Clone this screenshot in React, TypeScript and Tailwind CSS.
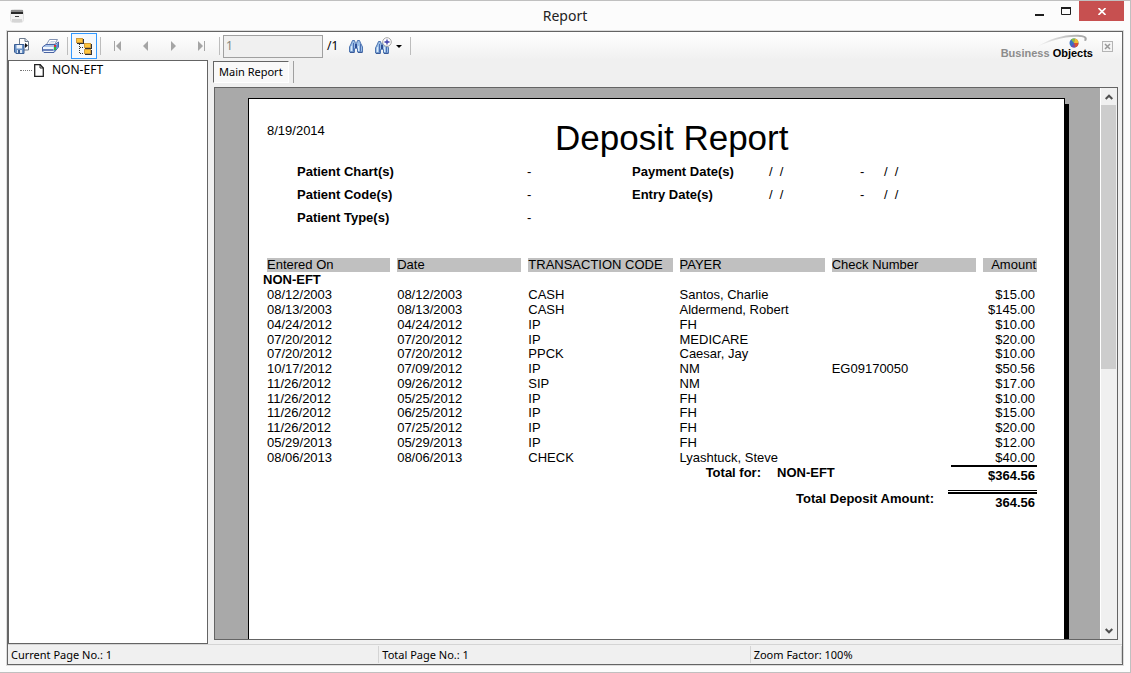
import type { ReactNode } from 'react';

const transactions = [
  { entered: '08/12/2003', date: '08/12/2003', code: 'CASH', payer: 'Santos, Charlie', check: '', amount: '$15.00' },
  { entered: '08/13/2003', date: '08/13/2003', code: 'CASH', payer: 'Aldermend, Robert', check: '', amount: '$145.00' },
  { entered: '04/24/2012', date: '04/24/2012', code: 'IP', payer: 'FH', check: '', amount: '$10.00' },
  { entered: '07/20/2012', date: '07/20/2012', code: 'IP', payer: 'MEDICARE', check: '', amount: '$20.00' },
  { entered: '07/20/2012', date: '07/20/2012', code: 'PPCK', payer: 'Caesar, Jay', check: '', amount: '$10.00' },
  { entered: '10/17/2012', date: '07/09/2012', code: 'IP', payer: 'NM', check: 'EG09170050', amount: '$50.56' },
  { entered: '11/26/2012', date: '09/26/2012', code: 'SIP', payer: 'NM', check: '', amount: '$17.00' },
  { entered: '11/26/2012', date: '05/25/2012', code: 'IP', payer: 'FH', check: '', amount: '$10.00' },
  { entered: '11/26/2012', date: '06/25/2012', code: 'IP', payer: 'FH', check: '', amount: '$15.00' },
  { entered: '11/26/2012', date: '07/25/2012', code: 'IP', payer: 'FH', check: '', amount: '$20.00' },
  { entered: '05/29/2013', date: '05/29/2013', code: 'IP', payer: 'FH', check: '', amount: '$12.00' },
  { entered: '08/06/2013', date: '08/06/2013', code: 'CHECK', payer: 'Lyashtuck, Steve', check: '', amount: '$40.00' },
];

const statusItems = ['Current Page No.: 1', 'Total Page No.: 1', 'Zoom Factor: 100%'];

function AppIcon() {
  return (
    <svg width="14" height="14" viewBox="0 0 14 14">
      <rect x="0.5" y="0.5" width="13" height="13" rx="3" fill="#f4f4f4" stroke="#e2e2e2" />
      <rect x="1" y="1" width="12" height="2" fill="#8a8a8a" />
      <rect x="1" y="3" width="12" height="2" fill="#2a2a2a" />
      <rect x="2" y="10" width="10" height="3" fill="#d6d6d6" />
      <rect x="5" y="7" width="4" height="1" fill="#444" />
    </svg>
  );
}

function ExportIcon() {
  return (
    <svg width="16" height="16" viewBox="0 0 16 16">
      <path d="M5.500.5h5.500l3.500 3v8.500h-9z" fill="#fff" stroke="#6c7a8c" />
      <path d="M11 .5v3h3.500" fill="#dbe6f4" stroke="#6c7a8c" />
      <path d="M11 5l3 2.500-3 2.500z" fill="#111" />
      <path d="M.5 6.500h9.500v9H2L.5 14z" fill="#6a93c8" stroke="#3c5f94" />
      <rect x="2.500" y="7" width="5.500" height="3.500" fill="#eef4fb" />
      <rect x="3" y="12" width="5" height="3" fill="#dfe8f3" />
      <rect x="4" y="12" width="2" height="3" fill="#3c5f94" />
    </svg>
  );
}

function PrintIcon() {
  return (
    <svg width="17" height="14" viewBox="0 0 17 14">
      <path d="M4.500 5.500L7.500.5h8l-3 5z" fill="#fff" stroke="#8494b4" />
      <path d="M8.500 2.500h5M7 4h5" stroke="#c3cfe2" />
      <path d="M.5 8L4 5.500h9l3.500-2.500v5L12 13.500H2L.5 12z" fill="#a9c4ea" stroke="#4a64a4" />
      <path d="M1 8h10.500v5H2L1 12z" fill="#f2f7fd" />
      <path d="M1 11h10.500" stroke="#3f5ca6" strokeWidth="1.500" />
      <path d="M12 8l4-3.500V8l-4 4.500z" fill="#5c8bd0" />
      <rect x="12" y="6" width="2" height="2" fill="#e03030" />
      <rect x="12" y="8" width="2" height="3" fill="#20c040" />
    </svg>
  );
}

function GroupTreeIcon() {
  return (
    <svg width="16" height="17" viewBox="0 0 16 17">
      <path d="M3.500 6v10M4 9.500h4M4 15.500h4" stroke="#333" strokeDasharray="1 1" />
      <rect x="1" y="1" width="7" height="5" fill="#333" />
      <rect x="9" y="6" width="7" height="5" fill="#333" />
      <rect x="9" y="12" width="7" height="5" fill="#333" />
      <rect x="0" y="0" width="7" height="5" fill="#d09a3c" />
      <rect x="8" y="5" width="7" height="5" fill="#d09a3c" />
      <rect x="8" y="11" width="7" height="5" fill="#d09a3c" />
      <rect x="1" y="1" width="5" height="3" fill="#ffc63c" />
      <rect x="9" y="6" width="5" height="3" fill="#ffc63c" />
      <rect x="9" y="12" width="5" height="3" fill="#ffc63c" />
    </svg>
  );
}

function BinocularShape() {
  return (
    <>
      <path d="M3.500 1.500h2l1 3v5h-1v3.500h-5V8l2-4z" fill="#9cbfe6" stroke="#4d74b0" />
      <path d="M8.500 1.500h2l1 2.500 2 4v5h-5V9.500h-1v-5z" fill="#9cbfe6" stroke="#4d74b0" />
      <path d="M2.500 7v5M9.500 7v5" stroke="#dcebf9" />
      <path d="M4.500 4v8.500M11.500 5v7.500" stroke="#4a6fb4" />
      <rect x="6" y="5" width="2" height="4" fill="#2f4f94" />
      <path d="M1 13.500h4.500M9 13.500h4.500" stroke="#3a5a98" />
    </>
  );
}

function FindIcon() {
  return (
    <svg width="14" height="15" viewBox="0 0 14 15">
      <BinocularShape />
    </svg>
  );
}

function ZoomIcon() {
  return (
    <svg width="17" height="18" viewBox="0 0 17 18">
      <g transform="translate(0 3)">
        <BinocularShape />
      </g>
      <circle cx="12" cy="5" r="4.300" fill="#fff" stroke="#a4a4a4" />
      <path d="M9.500 5h5M12 2.500v5" stroke="#3a3aa8" strokeWidth="1.300" />
    </svg>
  );
}

function NavIcon({ d, bar }: { d: string; bar?: number }) {
  return (
    <svg width="8" height="10" viewBox="0 0 8 10" fill="#a5a5a5">
      <path d={d} />
      {bar !== undefined && <rect x={bar} y="0" width="1" height="10" />}
    </svg>
  );
}

function BusinessObjectsLogo() {
  return (
    <div className="flex flex-col items-end">
      <svg width="56" height="14" viewBox="0 0 56 14" className="-mb-px">
        <defs>
          <linearGradient id="swoosh" x1="0" x2="1">
            <stop offset="0" stopColor="#f4f4f4" />
            <stop offset="1" stopColor="#a4a4a4" />
          </linearGradient>
        </defs>
        <path d="M0 13C12 5 28 0 43 1c6 .5 8 2.500 6 6l-2-.5c1.500-2.500 0-3.500-4-3.500C28 2 13 7 0 13z" fill="url(#swoosh)" />
        <circle cx="37" cy="9" r="4.500" fill="#3a6fc4" />
        <path d="M37 9l-3-3.400A4.500 4.500 0 0 1 38 4.600z" fill="#8bbf3f" />
        <path d="M37 9l1-4.400A4.500 4.500 0 0 1 41.500 9z" fill="#f0c030" />
        <path d="M37 9h4.500a4.500 4.500 0 0 1-3.500 4.400z" fill="#dc5030" />
        <path d="M37 9l1 4.400a4.500 4.500 0 0 1-3.500-.7z" fill="#7a4aa8" />
      </svg>
      <div className="font-['Liberation_Sans',sans-serif] text-[11px] leading-3 font-bold whitespace-nowrap text-[#8c8c8c]">
        Business <span className="text-black">Objects</span>
      </div>
    </div>
  );
}

function ToolButton({ label, children, disabled }: { label: string; children: ReactNode; disabled?: boolean }) {
  return (
    <button type="button" aria-label={label} disabled={disabled} className="flex h-6 w-7 items-center justify-center">
      {children}
    </button>
  );
}

function Separator() {
  return <div className="mx-[3px] h-[18px] w-px bg-[#bdbdbd]" />;
}

function TitleBar() {
  return (
    <header className="grid h-[29px] grid-cols-[1fr_auto_1fr] items-start">
      <div className="pt-2 pl-[10px]">
        <AppIcon />
      </div>
      <h1 className="pt-1 text-[14px] leading-[22px] text-[#222]">Report</h1>
      <div className="flex justify-end pr-[6px]">
        <button type="button" aria-label="Minimize" className="flex h-[22px] w-7 items-center justify-center">
          <svg width="9" height="8" viewBox="0 0 9 8"><path d="M0 7h9" stroke="#1e1e1e" strokeWidth="2" /></svg>
        </button>
        <button type="button" aria-label="Maximize" className="flex h-5 w-[26px] items-center justify-center">
          <svg width="10" height="8" viewBox="0 0 10 8"><path d="M.5 0v7.500h9V0" fill="none" stroke="#1e1e1e" /><path d="M0 1h10" stroke="#1e1e1e" strokeWidth="2" /></svg>
        </button>
        <button type="button" aria-label="Close" className="flex h-5 w-[45px] items-center justify-center bg-[#c75050]">
          <svg width="8" height="7" viewBox="0 0 8 7"><path d="M.5 0l7 7M7.500 0l-7 7" stroke="#fff" strokeWidth="1.600" /></svg>
        </button>
      </div>
    </header>
  );
}

function Toolbar() {
  return (
    <div className="flex h-7 items-center bg-linear-to-b from-white to-[#f0f0f0]">
      <ToolButton label="Export report"><ExportIcon /></ToolButton>
      <ToolButton label="Print report"><PrintIcon /></ToolButton>
      <Separator />
      <button type="button" aria-label="Toggle group tree" className="flex h-[26px] w-[26px] items-center justify-center border border-[#3399ff] bg-[#f6f9fc]">
        <GroupTreeIcon />
      </button>
      <Separator />
      <ToolButton label="First page" disabled><NavIcon d="M7 0v10L2 5z" bar={0} /></ToolButton>
      <ToolButton label="Previous page" disabled><NavIcon d="M6 0v10L1 5z" /></ToolButton>
      <ToolButton label="Next page" disabled><NavIcon d="M1 0v10l5-5z" /></ToolButton>
      <ToolButton label="Last page" disabled><NavIcon d="M0 0v10l5-5z" bar={6} /></ToolButton>
      <Separator />
      <input
        aria-label="Page number"
        defaultValue="1"
        disabled
        className="h-[23px] w-[100px] border border-[#a0a0a0] bg-[#f0f0f0] px-[2px] pb-[2px] text-[12px] text-[#85857a]"
      />
      <span className="w-[19px] pl-1 text-[12px] whitespace-nowrap">/1</span>
      <ToolButton label="Find text"><FindIcon /></ToolButton>
      <button type="button" aria-label="Zoom" className="flex h-6 items-center gap-1 pl-[5px]">
        <ZoomIcon />
        <svg width="6" height="3" viewBox="0 0 6 3"><path d="M0 0h6L3 3z" /></svg>
      </button>
      <div className="ml-2 h-[18px] w-px bg-[#bdbdbd]" />
      <div className="ml-auto flex items-center gap-[9px] pr-[9px]">
        <BusinessObjectsLogo />
        <button type="button" aria-label="Close view">
          <svg width="11" height="11" viewBox="0 0 11 11">
            <rect x="0.5" y="0.5" width="10" height="10" fill="#f4f4f4" stroke="#b4b4b4" />
            <path d="M3 3l5 5M8 3L3 8" stroke="#999" strokeWidth="1.500" />
          </svg>
        </button>
      </div>
    </div>
  );
}

function GroupTree() {
  return (
    <nav className="w-[200px] shrink-0 border border-[#646464] bg-white">
      <a href="#non-eft" className="flex h-[18px] items-center pl-[11px] text-[12px]">
        <span className="w-3 border-t border-dotted border-[#777]" />
        <svg width="10" height="13" viewBox="0 0 10 13" className="ml-[2px]">
          <path d="M.7.7h5.500L9.300 4v8.300H.7z" fill="#fff" stroke="#222" strokeWidth="1.300" />
          <path d="M6 .5V4h3.500" fill="none" stroke="#222" />
        </svg>
        <span className="ml-2">NON-EFT</span>
      </a>
    </nav>
  );
}

function Criteria() {
  return (
    <div className="mt-[2px] ml-[30px] grid grid-cols-[230px_105px_137px_91px_24px_1fr] leading-[23px] whitespace-pre">
      <b>Patient Chart(s)</b>
      <span>-</span>
      <b>Payment Date(s)</b>
      <span>/  /</span>
      <span>-</span>
      <span>/  /</span>
      <b>Patient Code(s)</b>
      <span>-</span>
      <b>Entry Date(s)</b>
      <span>/  /</span>
      <span>-</span>
      <span>/  /</span>
      <b>Patient Type(s)</b>
      <span className="col-span-4">-</span>
    </div>
  );
}

function TransactionTable() {
  return (
    <div className="mt-[29px] -ml-[7px] mr-5">
      <table className="h-[207px] w-full table-fixed border-separate border-spacing-x-[7px] border-spacing-y-0 leading-[14px] whitespace-nowrap">
        <colgroup>
          <col className="w-[123px]" />
          <col className="w-[124px]" />
          <col className="w-[144px]" />
          <col className="w-[145px]" />
          <col className="w-[144px]" />
          <col className="w-[54px]" />
        </colgroup>
        <thead>
          <tr className="h-[14px] text-left">
            <th className="bg-[#c0c0c0] p-0 font-normal">Entered On</th>
            <th className="bg-[#c0c0c0] p-0 font-normal">Date</th>
            <th className="bg-[#c0c0c0] p-0 font-normal">TRANSACTION CODE</th>
            <th className="bg-[#c0c0c0] p-0 font-normal">PAYER</th>
            <th className="bg-[#c0c0c0] p-0 font-normal">Check Number</th>
            <th className="bg-[#c0c0c0] p-0 pr-px text-right font-normal">Amount</th>
          </tr>
        </thead>
        <tbody>
          <tr id="non-eft" className="h-4">
            <th colSpan={6} className="p-0 text-left font-bold">
              <span className="-ml-1">NON-EFT</span>
            </th>
          </tr>
          {transactions.map((row, i) => (
            <tr key={i}>
              <td className="p-0">{row.entered}</td>
              <td className="p-0">{row.date}</td>
              <td className="p-0">{row.code}</td>
              <td className="p-0">{row.payer}</td>
              <td className="p-0">{row.check}</td>
              <td className="p-0 pr-[2px] text-right">{row.amount}</td>
            </tr>
          ))}
        </tbody>
      </table>
    </div>
  );
}

function Totals() {
  return (
    <div className="mr-[27px] font-bold">
      <div className="flex h-[25px] justify-end leading-4">
        <span className="mr-4">Total for:</span>
        <span className="w-[174px]">NON-EFT</span>
        <span className="w-[86px] border-t-2 border-black pr-[2px] text-right leading-[18px]">$364.56</span>
      </div>
      <div className="flex justify-end leading-[18px]">
        <span className="mr-[14px]">Total Deposit Amount:</span>
        <div className="w-[89px] border-t border-black pt-px">
          <div className="border-t-2 border-black pr-[2px] text-right">364.56</div>
        </div>
      </div>
    </div>
  );
}

function ReportPage() {
  return (
    <article className="min-w-0 flex-1 border border-b-0 border-black bg-white pt-[19px] pl-[18px] font-['Liberation_Sans',Arial,sans-serif] text-[13px] text-black shadow-[4px_6px_0_0_#000]">
      <div className="flex items-start">
        <time className="w-[288px] shrink-0 pt-1 leading-[18px]">8/19/2014</time>
        <h2 className="text-[35px] leading-10 whitespace-nowrap">Deposit Report</h2>
      </div>
      <Criteria />
      <TransactionTable />
      <Totals />
    </article>
  );
}

function ScrollBar() {
  return (
    <div className="flex w-[17px] shrink-0 flex-col border-l border-white bg-[#f0f0f0]">
      <button type="button" aria-label="Scroll up" className="flex h-[17px] items-center justify-center">
        <svg width="8" height="6" viewBox="0 0 8 6"><path d="M.7 5L4 1.700 7.300 5" fill="none" stroke="#505050" strokeWidth="2" /></svg>
      </button>
      <div className="flex-1">
        <div className="mr-px h-[51%] bg-[#cdcdcd]" />
      </div>
      <button type="button" aria-label="Scroll down" className="flex h-[17px] items-center justify-center">
        <svg width="8" height="6" viewBox="0 0 8 6"><path d="M.7 1L4 4.300 7.300 1" fill="none" stroke="#505050" strokeWidth="2" /></svg>
      </button>
    </div>
  );
}

export default function App() {
  return (
    <div className="flex h-screen flex-col border-t border-r border-b border-[#c0c0c0] bg-[#fcfcfc] font-['Noto_Sans','Segoe_UI',sans-serif] text-[11px] text-black">
      <TitleBar />
      <main className="mr-[6px] mb-[6px] ml-[6px] flex min-h-0 flex-1 flex-col border border-[#dcdcdc]">
        <div className="flex min-h-0 flex-1 flex-col border border-[#646464] bg-[#f0f0f0]">
          <Toolbar />
          <div className="flex min-h-0 flex-1">
            <GroupTree />
            <section className="ml-[5px] flex min-w-0 flex-1 flex-col pr-1 pb-1">
              <div className="flex h-[27px] items-start pt-px">
                <button type="button" className="h-[22px] border-t border-r border-b border-l border-t-[#646464] border-r-white border-b-white border-l-[#646464] bg-[#f9f9f9] px-[5px]">
                  Main Report
                </button>
                <div className="ml-1 h-[22px] w-px bg-[#a0a0a0]" />
              </div>
              <div className="ml-px flex min-h-0 flex-1 overflow-hidden border border-[#646464] bg-[#a9a9a9]">
                <div className="flex min-w-0 flex-1 overflow-hidden pt-[10px] pr-[35px] pl-[33px]">
                  <ReportPage />
                </div>
                <ScrollBar />
              </div>
            </section>
          </div>
          <footer className="flex h-5 border-t border-[#d4d4d4]">
            {statusItems.map((item) => (
              <div key={item} className="my-px flex-1 border-r border-[#d4d4d4] pl-[3px] leading-[18px]">
                {item}
              </div>
            ))}
          </footer>
        </div>
      </main>
    </div>
  );
}
